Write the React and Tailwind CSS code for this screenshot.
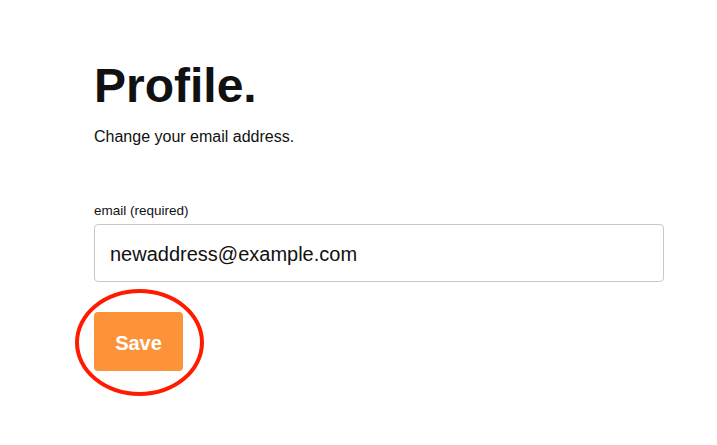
import { useState } from 'react';

const App = () => {
  const [email, setEmail] = useState('newaddress@example.com');

  return (
    <div className="min-h-screen bg-white text-[#111] font-['Liberation_Sans',Arial,sans-serif]">
      <div className="pl-[94px] pt-[62px]">
        <h1 className="text-[48px] leading-none font-bold">Profile.</h1>
        <p className="mt-[15px] text-[16px] leading-[24px]">Change your email address.</p>

        <form className="mt-[52px]" onSubmit={e => e.preventDefault()}>
          <label htmlFor="email" className="block text-[13.5px] leading-[20px] mb-[3px]">email (required)</label>
          <input
            id="email"
            type="email"
            value={email}
            onChange={e => setEmail(e.target.value)}
            className="block w-[570px] h-[58px] px-[15px] pt-[2px] text-[20px] border border-[#c8c8c8] rounded-[4px] outline-none"
          />

          <div className="relative mt-[30px] w-[89px]">
            <button
              type="submit"
              className="w-[89px] h-[59px] pt-[2px] rounded-[4px] bg-[#fd9339] text-white text-[20px] font-bold"
            >
              Save
            </button>
            <div className="absolute left-[-19px] top-[-23px] w-[129px] h-[107px] rounded-[50%] border-[4px] border-[#ff1a00] pointer-events-none" />
          </div>
        </form>
      </div>
    </div>
  );
};

export default App;
